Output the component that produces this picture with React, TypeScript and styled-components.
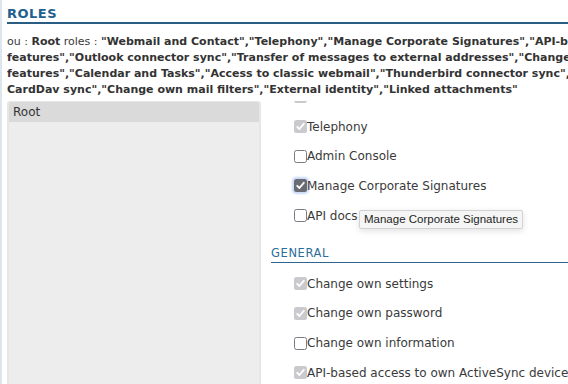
import React, { useLayoutEffect, useRef } from "react";
import styled, { createGlobalStyle, css } from "styled-components";

const GlobalStyle = createGlobalStyle`
  html, body { margin: 0; padding: 0; background: #ffffff; overflow: hidden; }
  body { font-family: "DejaVu Sans", "Liberation Sans", sans-serif; color: #333333; }
`;

const Page = styled.div`
  position: relative;
  height: 384px;
  display: flex;
  flex-direction: column;
  border-left: 2px solid #dde5ee;
  padding-left: 5px;
  box-sizing: border-box;
  overflow: hidden;
`;

const Title = styled.h2`
  margin: 6px 0 0 0;
  font-size: 13px;
  line-height: 16px;
  font-weight: 700;
  letter-spacing: 0.5px;
  color: #22608d;
  border-bottom: 2px solid #2a5d84;
`;

const Summary = styled.div`
  margin-top: 10px;
  font-size: 11px;
  line-height: 16px;
  color: #3a3a3a;
  overflow: hidden;
  b { font-weight: 700; color: #333; }
`;

const SummaryLine = styled.div`
  white-space: nowrap;
`;

const Body = styled.div`
  flex: 1;
  min-height: 0;
  margin-top: 3px;
  display: flex;
`;

const OuPanel = styled.div`
  width: 250px;
  flex: none;
  border: 2px solid #e6e6e6;
  border-top-width: 1px;
  border-bottom: none;
  border-radius: 3px 3px 0 0;
  background: #ededed;
`;

const OuItem = styled.div<{ $selected?: boolean }>`
  height: 20px;
  line-height: 20px;
  padding-left: 4px;
  font-size: 12px;
  color: #333;
  border-radius: 2px 2px 0 0;
  background: ${(p) => (p.$selected ? "#dadada" : "transparent")};
`;

const RolesScroll = styled.div`
  flex: 1;
  min-width: 0;
  overflow: hidden;
  padding-left: 10px;
`;

const RoleRow = styled.label`
  height: 29.7px;
  margin-left: 23px;
  display: flex;
  align-items: center;
  font-size: 12px;
  color: #3a3a3a;
  white-space: nowrap;
`;

const SectionTitle = styled.div`
  margin-top: 16px;
  margin-bottom: 6px;
  font-size: 11.5px;
  line-height: 14px;
  letter-spacing: 0.6px;
  text-transform: uppercase;
  color: #2c6c9a;
  padding-bottom: 1.5px;
  border-bottom: 1px solid #2d6590;
`;

type BoxState = "locked" | "off" | "on";

const Box = styled.span<{ $state: BoxState }>`
  width: 13px;
  height: 13px;
  flex: none;
  box-sizing: border-box;
  border-radius: 2.5px;
  display: inline-flex;
  align-items: center;
  justify-content: center;
  ${(p) =>
    p.$state === "locked" &&
    css`
      background: #c9c9ce;
    `}
  ${(p) =>
    p.$state === "off" &&
    css`
      background: #ffffff;
      border: 1.5px solid #7a7a82;
    `}
  ${(p) =>
    p.$state === "on" &&
    css`
      background: #6a6a72;
      box-shadow: 0 0 2px 2px rgba(130, 170, 235, 0.45);
    `}
`;

const Tooltip = styled.div`
  position: absolute;
  left: 357px;
  top: 210px;
  height: 17px;
  line-height: 17px;
  padding: 0 4px;
  background: #f5f5f5;
  border: 1px solid #d2d2d2;
  border-radius: 2px;
  box-shadow: 0 2px 6px rgba(0, 0, 0, 0.12);
  font-family: "Liberation Sans", Arial, sans-serif;
  font-size: 11.5px;
  color: #1e1e1e;
  white-space: nowrap;
  box-sizing: content-box;
`;

function Check({ state }: { state: BoxState }) {
  return (
    <Box $state={state}>
      {state !== "off" && (
        <svg width="11" height="11" viewBox="0 0 11 11">
          <polyline
            points="2.2,5.8 4.4,8 8.8,2.8"
            fill="none"
            stroke="#ffffff"
            strokeWidth="1.8"
            strokeLinecap="round"
            strokeLinejoin="round"
          />
        </svg>
      )}
    </Box>
  );
}

const rolesTop: [string, BoxState][] = [
  ["Webmail and Contact", "locked"],
  ["Telephony", "locked"],
  ["Admin Console", "off"],
  ["Manage Corporate Signatures", "on"],
  ["API docs", "off"],
];

const rolesGeneral: [string, BoxState][] = [
  ["Change own settings", "locked"],
  ["Change own password", "locked"],
  ["Change own information", "off"],
  ["API-based access to own ActiveSync devices", "locked"],
  ["Outlook connector sync", "locked"],
];

export default function App() {
  const scrollRef = useRef<HTMLDivElement>(null);
  useLayoutEffect(() => {
    if (scrollRef.current) scrollRef.current.scrollTop = 19;
  }, []);

  return (
    <>
      <GlobalStyle />
      <Page>
        <Title>ROLES</Title>
        <Summary>
          <SummaryLine>
            ou : <b>Root</b> roles : <b>"Webmail and Contact","Telephony","Manage Corporate Signatures","API-based access to ActiveSync</b>
          </SummaryLine>
          <SummaryLine>
            <b>features","Outlook connector sync","Transfer of messages to external addresses","Change own mail</b>
          </SummaryLine>
          <SummaryLine>
            <b>features","Calendar and Tasks","Access to classic webmail","Thunderbird connector sync","CalDav and</b>
          </SummaryLine>
          <SummaryLine>
            <b>CardDav sync","Change own mail filters","External identity","Linked attachments"</b>
          </SummaryLine>
        </Summary>
        <Body>
          <OuPanel>
            <OuItem $selected>Root</OuItem>
          </OuPanel>
          <RolesScroll ref={scrollRef}>
            {rolesTop.map(([label, state]) => (
              <RoleRow key={label}>
                <Check state={state} />
                {label}
              </RoleRow>
            ))}
            <SectionTitle>General</SectionTitle>
            {rolesGeneral.map(([label, state]) => (
              <RoleRow key={label}>
                <Check state={state} />
                {label}
              </RoleRow>
            ))}
          </RolesScroll>
        </Body>
        <Tooltip>Manage Corporate Signatures</Tooltip>
      </Page>
    </>
  );
}
